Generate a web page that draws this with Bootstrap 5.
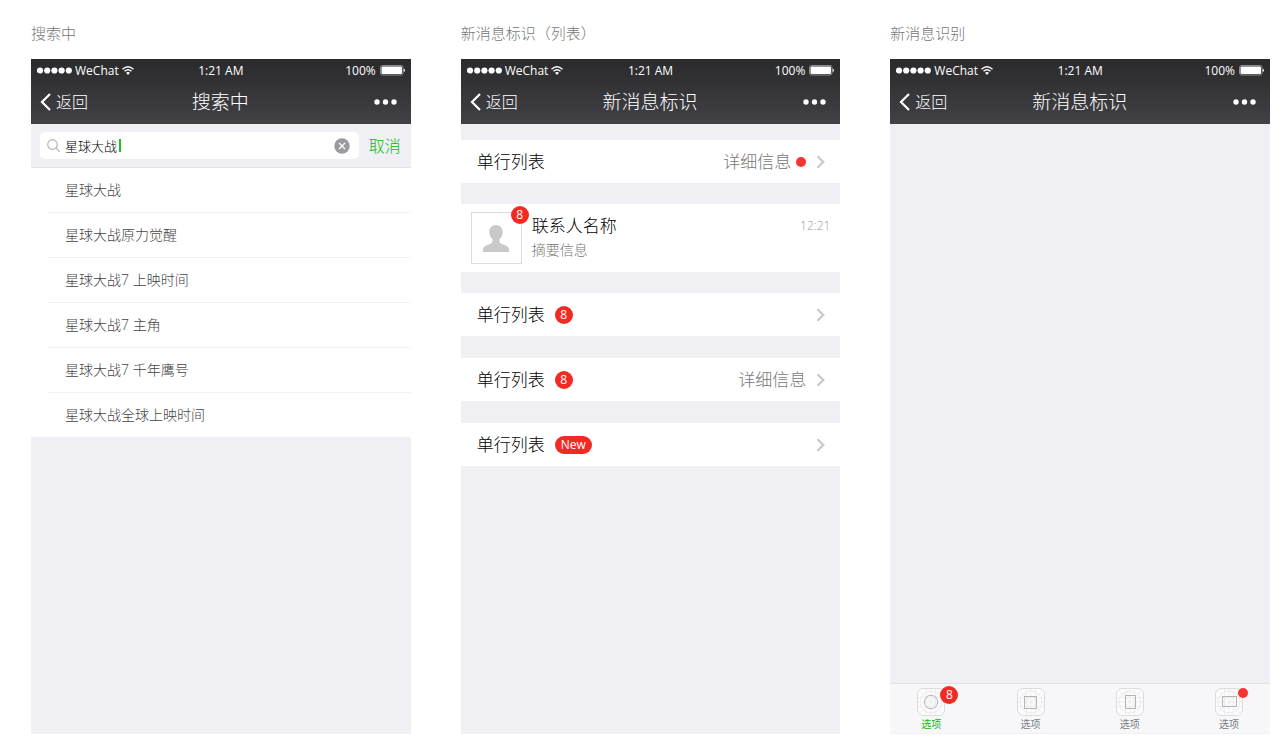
<!DOCTYPE html>
<html lang="zh-CN">
<head>
<meta charset="utf-8">
<meta name="viewport" content="width=device-width, initial-scale=1">
<title>新消息标识</title>
<link href="https://cdn.jsdelivr.net/npm/bootstrap@5.3.0/dist/css/bootstrap.min.css" rel="stylesheet">
<style>
body{font-family:"Open Sans","Noto Sans CJK SC",sans-serif;font-weight:300;color:#000;background:#fff;line-height:20px}
button,input{font-family:inherit;font-weight:inherit}
.board{padding:23px 16px 21px 31px;gap:50px}
.screen{flex:1 1 0;min-width:0}
.screen-title{font-size:15px;font-weight:300;line-height:20px;color:#777;margin-bottom:16px}
.phone{background:#efeff4}
.phone-head{background:linear-gradient(#2a2a2c,#414146);color:#fff;height:65px}
.status-bar{height:24px;padding:0 6px 0 6px;font-size:12px;font-weight:400;display:grid;grid-template-columns:1fr auto 1fr}
.status-bar svg{margin-bottom:2px}
.status-left{gap:3px}
.nav-bar{height:41px;padding:0 14px 4px 9px;display:grid;grid-template-columns:1fr auto 1fr}
.nav-bar h2{font-size:19px;font-weight:300;line-height:24px;padding-left:4px}
.plain-btn{border:0;background:none;padding:0;color:inherit;line-height:20px}
.back-btn{font-size:16px;gap:5px}
.search-bar{height:44px;padding:0 10px 0 9px;gap:10px;border-bottom:1px solid #e2e2e6}
.search-box{background:#fff;border-radius:5px;height:27px;padding:0 9px 0 7px;gap:5px}
.search-box input{border:0;outline:0;padding:0;width:100%;font-size:13px;line-height:20px;color:#000;background:none}
.caret{left:79px;top:7px;width:2px;height:13px;background:#1fc01f}
.cancel-link{font-size:16px;color:#09bb07;text-decoration:none}
.results{background:#fff;padding-left:17px}
.results a{display:block;height:45px;padding:12px 17px 0;font-size:14px;color:#444;text-decoration:none;border-bottom:1px solid #f3f3f5}
.results li:last-child a{height:44px;border:0}
.cell-row{background:#fff;height:43px;margin-top:22px;padding:0 15px 0 16px;font-size:17px;color:#000;text-decoration:none}
.cell-row:first-child{margin-top:16px}
.cell-contact{height:68px;margin:21px 0;padding:0 10px;gap:10px}
.cell-note{color:#777}
.cell-note + svg{margin-left:10px}
.cell-note + .dot{margin:0 10px 0 5px}
.count-badge{background:#f12b24;color:#fff;font-size:12px;font-weight:400;line-height:18px;height:18px;min-width:18px;border-radius:9px;text-align:center}
.side-badge{margin-left:10px}
.word-badge{padding:0 6px}
.dot{width:10px;height:10px;border-radius:50%;background:#f83430}
.avatar{width:51px;height:52px;border:1px solid #ddd}
.avatar .count-badge{left:39px;top:-7px}
.digest{font-size:14px;color:#777}
.time{font-size:12px;color:#999}
.tabs-bottom{height:50px;background:#f7f7fa;border-top:1px solid #dfdfe4;padding:4px 27px 0;margin-bottom:1px}
.tabs-bottom a{width:28px;font-size:10px;line-height:16px;color:#7a7e83;font-weight:400;text-decoration:none}
.tabs-bottom a.on{color:#09bb07}
.tabs-bottom .count-badge{left:23px;top:-2px}
.tabs-bottom .dot{left:23px;top:0}
svg{display:block;flex:none}
</style>
</head>
<body>
<svg width="0" height="0" class="position-absolute" aria-hidden="true">
  <symbol id="signal" viewBox="0 0 35 7"><g fill="#fff"><circle cx="3" cy="3.5" r="3.1"/><circle cx="10.2" cy="3.5" r="3.1"/><circle cx="17.4" cy="3.5" r="3.1"/><circle cx="24.6" cy="3.5" r="3.1"/><circle cx="31.8" cy="3.5" r="3.1"/></g></symbol>
  <symbol id="wifi" viewBox="0 0 12 9"><g fill="none" stroke="#fff" stroke-width="1.4"><path d="M.5 3.2Q6-1.6 11.5 3.2"/><path d="M2.5 5.3Q6 2.3 9.5 5.3"/></g><path d="M4 6.8Q6 5.2 8 6.8L6 9z" fill="#fff"/></symbol>
  <symbol id="battery" viewBox="0 0 25 11"><rect x=".5" y=".5" width="22.5" height="9.5" rx="2" fill="none" stroke="#8d8d90"/><rect x="1.5" y="1.5" width="20.5" height="7.5" rx="1" fill="#fff"/><path d="M23.7 3.5q1.2.4 1.2 1.8t-1.2 1.8z" fill="#fff"/></symbol>
  <symbol id="back" viewBox="0 0 11 18"><path d="M10 1L2 9l8 8" fill="none" stroke="#fff" stroke-width="2.2"/></symbol>
  <symbol id="more" viewBox="0 0 23 6"><g fill="#fff"><circle cx="3" cy="3" r="2.7"/><circle cx="11.5" cy="3" r="2.7"/><circle cx="20" cy="3" r="2.7"/></g></symbol>
  <symbol id="go" viewBox="0 0 9 14"><path d="M1.5 1.2L7.3 7l-5.8 5.8" fill="none" stroke="#c7c7cc" stroke-width="2.2"/></symbol>
  <symbol id="tile" viewBox="0 0 28 28"><rect x=".5" y=".5" width="27" height="27" rx="5.5" fill="#fcfcfd" stroke="#dcdcde"/><g fill="none" stroke="#ebebed"><path d="M14 1v26M1 14h26M2 2l24 24M26 2L2 26M9.5 1v26M18.5 1v26M1 9.5h26M1 18.5h26" stroke-width=".7"/><circle cx="14" cy="14" r="11"/><circle cx="14" cy="14" r="5"/></g></symbol>
</svg>
<main class="board d-flex min-vh-100">

  <section class="screen d-flex flex-column">
    <h1 class="screen-title">搜索中</h1>
    <div class="phone flex-grow-1">
      <header class="phone-head">
        <div class="status-bar align-items-center">
          <span class="status-left d-flex align-items-center"><svg width="35" height="7"><use href="#signal"/></svg>WeChat<svg width="12" height="9"><use href="#wifi"/></svg></span>
          <span>1:21 AM</span>
          <span class="d-flex align-items-center justify-content-end gap-1">100%<svg width="25" height="11"><use href="#battery"/></svg></span>
        </div>
        <nav class="nav-bar align-items-center">
          <button type="button" class="plain-btn back-btn d-flex align-items-center"><svg width="11" height="18"><use href="#back"/></svg>返回</button>
          <h2 class="m-0">搜索中</h2>
          <button type="button" class="plain-btn ms-auto" aria-label="更多"><svg width="23" height="6"><use href="#more"/></svg></button>
        </nav>
      </header>
      <form class="search-bar d-flex align-items-center">
        <div class="search-box position-relative d-flex align-items-center flex-grow-1">
          <svg width="13" height="13" viewBox="0 0 13 13" fill="none" stroke="#b5b5b9" stroke-width="1.2"><circle cx="5.5" cy="5.5" r="4.8"/><path d="M9 9l3.7 3.7"/></svg>
          <input type="text" value="星球大战" aria-label="搜索">
          <span class="caret position-absolute"></span>
          <button type="button" class="plain-btn" aria-label="清除"><svg width="16" height="16" viewBox="0 0 16 16"><circle cx="8" cy="8" r="7.7" fill="#9a9aa0"/><path d="M5 5l6 6M11 5l-6 6" stroke="#fff" stroke-width="1.2"/></svg></button>
        </div>
        <a href="#" class="cancel-link">取消</a>
      </form>
      <ul class="results list-unstyled m-0">
        <li><a href="#">星球大战</a></li>
        <li><a href="#">星球大战原力觉醒</a></li>
        <li><a href="#">星球大战7 上映时间</a></li>
        <li><a href="#">星球大战7 主角</a></li>
        <li><a href="#">星球大战7 千年鹰号</a></li>
        <li><a href="#">星球大战全球上映时间</a></li>
      </ul>
    </div>
  </section>

  <section class="screen d-flex flex-column">
    <h1 class="screen-title">新消息标识（列表）</h1>
    <div class="phone flex-grow-1">
      <header class="phone-head">
        <div class="status-bar align-items-center">
          <span class="status-left d-flex align-items-center"><svg width="35" height="7"><use href="#signal"/></svg>WeChat<svg width="12" height="9"><use href="#wifi"/></svg></span>
          <span>1:21 AM</span>
          <span class="d-flex align-items-center justify-content-end gap-1">100%<svg width="25" height="11"><use href="#battery"/></svg></span>
        </div>
        <nav class="nav-bar align-items-center">
          <button type="button" class="plain-btn back-btn d-flex align-items-center"><svg width="11" height="18"><use href="#back"/></svg>返回</button>
          <h2 class="m-0">新消息标识</h2>
          <button type="button" class="plain-btn ms-auto" aria-label="更多"><svg width="23" height="6"><use href="#more"/></svg></button>
        </nav>
      </header>
      <div class="d-flex flex-column">
        <a href="#" class="cell-row d-flex align-items-center"><span>单行列表</span><span class="cell-note ms-auto">详细信息</span><span class="dot"></span><svg width="9" height="14"><use href="#go"/></svg></a>
        <a href="#" class="cell-row cell-contact d-flex align-items-center">
          <span class="avatar position-relative d-flex align-items-center justify-content-center">
            <svg width="28" height="27" viewBox="0 0 28 27"><path d="M14 0c4.200 0 6.700 3 6.700 7 0 3-1.200 5.600-3.200 7.300-.5 2.800.2 3.700 2.500 4.600 4.500 1.600 7 2.600 7 5.600V27H1v-2.500c0-3 2.500-4 7-5.600 2.300-.9 3-1.800 2.500-4.600C8.500 12.600 7.300 10 7.300 7c0-4 2.500-7 6.700-7z" fill="#c9c9c9"/></svg>
            <span class="count-badge position-absolute">8</span>
          </span>
          <span class="d-flex flex-column gap-1 flex-grow-1">
            <span class="d-flex align-items-center justify-content-between"><span>联系人名称</span><span class="time">12:21</span></span>
            <span class="digest">摘要信息</span>
          </span>
        </a>
        <a href="#" class="cell-row d-flex align-items-center mt-0"><span>单行列表</span><span class="count-badge side-badge">8</span><svg width="9" height="14" class="ms-auto"><use href="#go"/></svg></a>
        <a href="#" class="cell-row d-flex align-items-center"><span>单行列表</span><span class="count-badge side-badge">8</span><span class="cell-note ms-auto">详细信息</span><svg width="9" height="14"><use href="#go"/></svg></a>
        <a href="#" class="cell-row d-flex align-items-center"><span>单行列表</span><span class="count-badge side-badge word-badge">New</span><svg width="9" height="14" class="ms-auto"><use href="#go"/></svg></a>
      </div>
    </div>
  </section>

  <section class="screen d-flex flex-column">
    <h1 class="screen-title">新消息识别</h1>
    <div class="phone flex-grow-1 d-flex flex-column">
      <header class="phone-head">
        <div class="status-bar align-items-center">
          <span class="status-left d-flex align-items-center"><svg width="35" height="7"><use href="#signal"/></svg>WeChat<svg width="12" height="9"><use href="#wifi"/></svg></span>
          <span>1:21 AM</span>
          <span class="d-flex align-items-center justify-content-end gap-1">100%<svg width="25" height="11"><use href="#battery"/></svg></span>
        </div>
        <nav class="nav-bar align-items-center">
          <button type="button" class="plain-btn back-btn d-flex align-items-center"><svg width="11" height="18"><use href="#back"/></svg>返回</button>
          <h2 class="m-0">新消息标识</h2>
          <button type="button" class="plain-btn ms-auto" aria-label="更多"><svg width="23" height="6"><use href="#more"/></svg></button>
        </nav>
      </header>
      <nav class="tabs-bottom d-flex justify-content-between mt-auto">
        <a href="#" class="on position-relative text-center"><svg width="28" height="28"><use href="#tile"/><circle cx="14" cy="14" r="6.7" fill="none" stroke="#b4b4b6"/></svg>选项<span class="count-badge position-absolute">8</span></a>
        <a href="#" class="text-center"><svg width="28" height="28"><use href="#tile"/><rect x="7.5" y="8.5" width="12" height="12" fill="none" stroke="#b4b4b6"/></svg>选项</a>
        <a href="#" class="text-center"><svg width="28" height="28"><use href="#tile"/><rect x="9.5" y="7.5" width="10" height="13" fill="none" stroke="#b4b4b6"/></svg>选项</a>
        <a href="#" class="position-relative text-center"><svg width="28" height="28"><use href="#tile"/><rect x="7.5" y="8.5" width="14" height="10" fill="none" stroke="#b4b4b6"/></svg>选项<span class="dot position-absolute"></span></a>
      </nav>
    </div>
  </section>

</main>
<script src="https://cdn.jsdelivr.net/npm/bootstrap@5.3.0/dist/js/bootstrap.bundle.min.js"></script>
</body>
</html>
